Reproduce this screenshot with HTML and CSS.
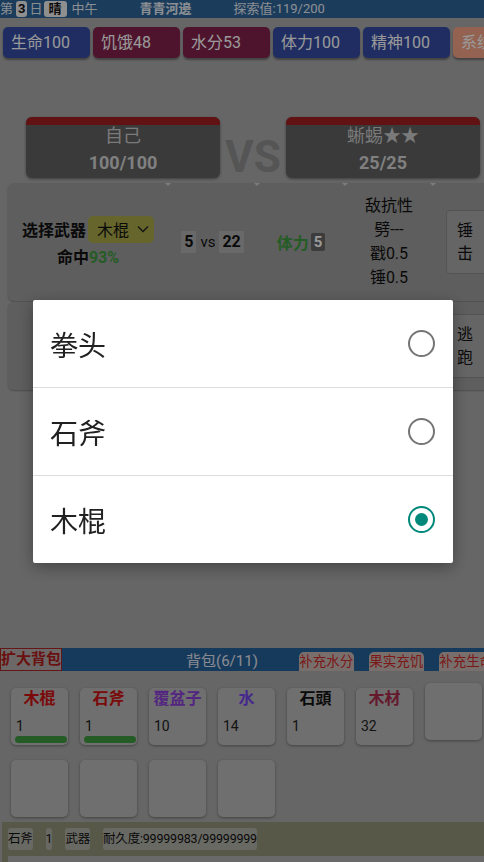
FILE: index.html
```html
<!DOCTYPE html>
<html lang="zh">
<head>
    <meta charset="UTF-8">
    <meta name="viewport" content="width=device-width, initial-scale=1.0">
    <title>荒野求生</title>
    <link rel="stylesheet" href="styles.css">
</head>
<body>

<div class="app">
    <div class="top-bar">
        <span class="day">第<span class="chip">3</span>日<span class="chip wide">晴</span>中午</span>
        <span class="place">青青河邊</span>
        <span class="explore">探索值:119/200</span>
    </div>

    <div class="stats">
        <div class="stat life">生命100</div>
        <div class="stat need">饥饿48</div>
        <div class="stat need">水分53</div>
        <div class="stat life">体力100</div>
        <div class="stat life">精神100</div>
        <div class="stat system">系统</div>
    </div>

    <div class="fighters">
        <div class="fighter">
            <div class="hp-bar"></div>
            <div class="fighter-name">自己</div>
            <div class="fighter-hp">100/100</div>
        </div>
        <div class="vs">VS</div>
        <div class="fighter">
            <div class="hp-bar"></div>
            <div class="fighter-name">蜥蜴★★</div>
            <div class="fighter-hp">25/25</div>
        </div>
    </div>

    <div class="battle">
        <div class="col weapon">
            <div class="weapon-line">
                <b>选择武器</b>
                <span class="select">木棍
                    <svg width="12" height="8" viewBox="0 0 12 8"><polyline points="1,1.5 6,6.5 11,1.5" fill="none" stroke="#222" stroke-width="1.3"/></svg>
                </span>
            </div>
            <div class="hit">命中<span class="green">93%</span></div>
        </div>
        <div class="col dmg"><span class="num">5</span><span class="vs-small">vs</span><span class="num">22</span></div>
        <div class="col cost"><span class="green">体力</span><span class="cost-num">5</span></div>
        <div class="col resist">敌抗性<br>劈---<br>戳0.5<br>锤0.5</div>
        <div class="col action"><button class="act">锤<br>击</button></div>
    </div>

    <div class="battle second">
        <div class="col action"><button class="act">逃<br>跑</button></div>
    </div>

    <div class="bag-bar">
        <div class="expand">扩大背包</div>
        <div class="bag-title">背包(6/11)</div>
        <div class="bag-actions">
            <div class="bag-btn">补充水分</div>
            <div class="bag-btn">果实充饥</div>
            <div class="bag-btn">补充生命</div>
        </div>
    </div>

    <div class="items">
        <div class="cell"><div class="item-name red">木棍</div><div class="count">1</div><div class="durability"></div></div>
        <div class="cell"><div class="item-name red">石斧</div><div class="count">1</div><div class="durability"></div></div>
        <div class="cell"><div class="item-name purple">覆盆子</div><div class="count">10</div></div>
        <div class="cell"><div class="item-name violet">水</div><div class="count">14</div></div>
        <div class="cell"><div class="item-name">石頭</div><div class="count">1</div></div>
        <div class="cell"><div class="item-name maroon">木材</div><div class="count">32</div></div>
        <div class="cell lifted"></div>
        <div class="cell"></div>
        <div class="cell"></div>
        <div class="cell"></div>
        <div class="cell"></div>
    </div>

    <div class="info">
        <div class="info-tags">
            <span class="tag">石斧</span>
            <span class="tag">1</span>
            <span class="tag">武器</span>
            <span class="tag">耐久度:99999983/99999999</span>
        </div>
        <div class="equip-line"><span>装备</span><span>耐久度</span></div>
    </div>
</div>

<div class="overlay"></div>
<div class="dialog">
    <div class="option">拳头<span class="radio"></span></div>
    <div class="option">石斧<span class="radio"></span></div>
    <div class="option">木棍<span class="radio checked"></span></div>
</div>

</body>
</html>
```

FILE: styles.css
```css
:root {
    --page-color: #aaaaaa;
    --panel-color: #9d9d9d;
    --green: #3f9a3f;
    --teal: #00897b;
    --font-family: Roboto, "Noto Sans CJK SC", sans-serif;
}

* {
    box-sizing: border-box;
}

body {
    margin: 0;
    background-color: var(--page-color);
    font-family: var(--font-family);
    color: #111;
}

.app {
    width: 484px;
    height: 862px;
    overflow: hidden;
}

/* top status line */
.top-bar {
    display: flex;
    align-items: center;
    height: 18px;
    background-color: #2f6499;
    color: #e6edf5;
    font-size: 13px;
    line-height: 18px;
    white-space: nowrap;
}

.chip {
    display: inline-block;
    background-color: #eeeeee;
    color: #111;
    font-weight: bold;
    border-radius: 3px;
    line-height: 16px;
    padding: 0 2px;
    margin: 0 2px 0 3px;
}

.chip.wide {
    padding: 0 5px;
    margin: 0 5px 0 1px;
}

.place {
    margin-left: 42px;
    font-weight: bold;
}

.explore {
    margin-left: 42px;
}

/* stat buttons */
.stats {
    display: flex;
    gap: 3px;
    margin-top: 9px;
    padding-left: 3px;
    white-space: nowrap;
}

.stat {
    flex: 0 0 87px;
    height: 31px;
    padding-left: 8px;
    border-radius: 5px;
    color: #ffffff;
    font-size: 16px;
    line-height: 31px;
    box-shadow: 0 2px 2px rgba(0, 0, 0, 0.35);
}

.life {
    background-color: #344ca4;
}

.need {
    background-color: #84224c;
}

.system {
    background-color: #f6a487;
}

/* fighters */
.fighters {
    display: flex;
    margin-top: 59px;
    padding-left: 26px;
}

.fighter {
    width: 194px;
    height: 61px;
    background-color: #616161;
    border-radius: 6px;
    overflow: hidden;
    text-align: center;
    box-shadow: 0 1px 3px rgba(0, 0, 0, 0.4);
}

.hp-bar {
    height: 8px;
    background-color: #a31f1f;
}

.fighter-name {
    color: #cccccc;
    font-size: 18px;
    line-height: 22px;
}

.fighter-hp {
    margin-top: 2px;
    color: #d6d6d6;
    font-size: 18px;
    font-weight: bold;
    line-height: 28px;
}

.vs {
    width: 66px;
    align-self: flex-end;
    margin-bottom: -2px;
    color: #8e8e8e;
    font-size: 44px;
    font-weight: bold;
    line-height: 46px;
    text-align: center;
}

/* battle panel */
.battle {
    display: grid;
    grid-template-columns: 160px 89px 88px 88px 1fr;
    height: 118px;
    margin: 5px -10px 0 8px;
    background-color: var(--panel-color);
    border-radius: 6px;
    box-shadow: 0 1px 2px rgba(0, 0, 0, 0.25);
    font-size: 16px;
}

.battle.second {
    height: 88px;
    margin-top: 1px;
}

.battle.second .action {
    grid-column: 5;
}

.col {
    position: relative;
    display: flex;
    align-items: center;
    justify-content: center;
}

.col + .col::before {
    content: "";
    position: absolute;
    top: 0;
    left: -3px;
    border-left: 3px solid transparent;
    border-right: 3px solid transparent;
    border-top: 3px solid #cfcfcf;
}

.weapon {
    flex-direction: column;
}

.weapon-line {
    display: flex;
    align-items: center;
    gap: 2px;
}

.select {
    display: flex;
    align-items: center;
    gap: 8px;
    height: 27px;
    padding: 0 5px 0 9px;
    background-color: #a8a84a;
    border-radius: 5px;
}

.hit {
    margin-top: 4px;
    font-weight: bold;
    line-height: 22px;
}

.green {
    color: var(--green);
    font-weight: bold;
}

.num {
    padding: 0 3px;
    background-color: #b0b0b0;
    font-weight: bold;
    line-height: 22px;
}

.vs-small {
    margin: 0 4px;
    font-size: 15px;
}

.cost-num {
    margin-left: 2px;
    padding: 0 3px;
    background-color: #646464;
    border-radius: 2px;
    color: #ffffff;
    font-weight: bold;
    font-size: 15px;
    line-height: 18px;
}

.resist {
    text-align: center;
    line-height: 24px;
}

.action {
    justify-content: flex-start;
}

.act {
    width: 46px;
    height: 64px;
    margin-left: 13px;
    padding: 0 0 0 10px;
    background-color: #a9a9a9;
    border: 1px solid #8a8a8a;
    border-radius: 4px;
    color: #111;
    font-family: var(--font-family);
    font-size: 16px;
    line-height: 23px;
    text-align: left;
}

/* bag */
.bag-bar {
    display: flex;
    align-items: flex-end;
    height: 23px;
    margin-top: 258px;
    background-color: #256199;
    white-space: nowrap;
}

.expand {
    width: 66px;
    height: 23px;
    background-color: #b4aeae;
    border: 1px solid #a82626;
    color: #b01c1c;
    font-size: 15px;
    font-weight: bold;
    line-height: 21px;
    text-align: center;
}

.bag-title {
    align-self: center;
    margin-left: 124px;
    color: #e6e6f2;
    font-size: 15px;
}

.bag-actions {
    display: flex;
    gap: 15px;
    margin-left: 41px;
}

.bag-btn {
    width: 55px;
    height: 19px;
    background-color: #c8bab5;
    border-radius: 5px 5px 0 0;
    color: #cc2a2a;
    font-size: 13.5px;
    line-height: 19px;
    text-align: center;
}

.items {
    display: grid;
    grid-template-columns: repeat(7, 57px);
    grid-auto-rows: 57px;
    column-gap: 12px;
    row-gap: 15px;
    margin-top: 17px;
    padding-left: 11px;
}

.cell {
    background-color: #b9b9b9;
    border-radius: 5px;
    box-shadow: 0 1px 3px rgba(0, 0, 0, 0.35);
}

.cell.lifted {
    transform: translateY(-5px);
}

.item-name {
    margin-top: 1px;
    font-size: 16px;
    font-weight: bold;
    line-height: 20px;
    text-align: center;
}

.red {
    color: #cc1111;
}

.purple {
    color: #8a3fd6;
}

.violet {
    color: #7444e8;
}

.maroon {
    color: #a72a4b;
}

.count {
    margin-top: 7px;
    padding-left: 5px;
    font-size: 14px;
    line-height: 20px;
    color: #222;
}

.durability {
    width: 52px;
    height: 7px;
    margin-left: 4px;
    background-color: #3f9a3f;
    border-radius: 4px;
}

/* selected item info */
.info {
    height: 60px;
    margin: 5px 0 0 2px;
    padding: 6px 0 0 6px;
    background-color: #93937b;
}

.info-tags {
    display: flex;
    gap: 13px;
}

.tag {
    background-color: #afafa7;
    border-radius: 3px;
    font-size: 12.5px;
    letter-spacing: -0.2px;
    line-height: 22px;
}

.equip-line {
    display: flex;
    gap: 32px;
    height: 30px;
    margin-top: 6px;
    padding: 2px 0 0 202px;
    background-color: #afafaf;
    font-size: 13px;
}

/* weapon picker dialog */
.overlay {
    position: fixed;
    top: 0;
    left: 0;
    right: 0;
    bottom: 0;
    background-color: rgba(0, 0, 0, 0.4);
}

.dialog {
    position: fixed;
    top: 300px;
    left: 33px;
    width: 420px;
    background-color: #ffffff;
    border-radius: 2px;
    box-shadow: 0 4px 16px rgba(0, 0, 0, 0.35);
}

.option {
    display: flex;
    align-items: center;
    justify-content: space-between;
    height: 87px;
    padding: 0 18px 0 17px;
    color: #212121;
    font-size: 28px;
}

.option + .option {
    border-top: 1px solid #dddddd;
    box-sizing: content-box;
}

.radio {
    display: flex;
    align-items: center;
    justify-content: center;
    width: 27px;
    height: 27px;
    border: 2.5px solid #757575;
    border-radius: 50%;
}

.radio.checked {
    border-color: var(--teal);
}

.radio.checked::after {
    content: "";
    width: 13px;
    height: 13px;
    border-radius: 50%;
    background-color: var(--teal);
}
```
